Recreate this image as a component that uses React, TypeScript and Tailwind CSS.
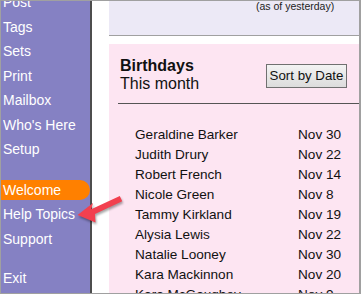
import React from "react";

const rows: [string, string][] = [
  ["Geraldine Barker", "Nov 30"],
  ["Judith Drury", "Nov 22"],
  ["Robert French", "Nov 14"],
  ["Nicole Green", "Nov 8"],
  ["Tammy Kirkland", "Nov 19"],
  ["Alysia Lewis", "Nov 22"],
  ["Natalie Looney", "Nov 30"],
  ["Kara Mackinnon", "Nov 20"],
  ["Kara McGaughey", "Nov 9"],
];

const topItems = ["Post", "Tags", "Sets", "Print", "Mailbox", "Who's Here", "Setup"];

function NavItem({ label }: { label: string }) {
  return <div className="h-[24.5px] leading-[24.5px] pl-[2px] whitespace-nowrap">{label}</div>;
}

export default function App() {
  return (
    <div
      className="relative w-[361px] h-[294px] border border-r-2 border-[#a0a0a0] bg-white overflow-hidden flex"
      style={{ fontFamily: '"Liberation Sans", Arial, sans-serif' }}
    >
      {/* Sidebar */}
      <div className="w-[91px] shrink-0 bg-[#8581c3] border-r-2 border-[#4d4d4d] text-white text-[14px]">
        <div className="-mt-[10.8px]">
          {topItems.map((t) => (
            <NavItem key={t} label={t} />
          ))}
          <div className="h-[15.5px]" />
          <div className="h-[25px] flex items-center">
            <div className="relative z-10 w-[98px] h-[20px] leading-[20px] bg-[#ff8000] rounded-r-[10px] pl-[2px]">
              Welcome
            </div>
          </div>
          <NavItem label="Help Topics" />
          <NavItem label="Support" />
          <div className="h-[15px]" />
          <NavItem label="Exit" />
        </div>
      </div>

      {/* Main */}
      <div className="flex-1 pl-[17px] flex flex-col min-w-0">
        <div className="h-[35px] shrink-0 bg-[#ece9f6] border-b border-[#a0a0a0]">
          <div className="-mt-px pl-[147px] text-[10.5px] leading-[12px] text-[#222] whitespace-nowrap">
            (as of yesterday)
          </div>
        </div>
        <div className="mt-[8px] flex-1 bg-[#fde5f2] pt-[12.5px] text-[#111]">
          <div className="flex justify-between pl-[11px] pr-[12px]">
            <div className="text-[16px] leading-[18px]">
              <div className="font-bold">Birthdays</div>
              <div>This month</div>
            </div>
            <button className="mt-[7.5px] h-[24px] w-[81px] border border-[#707070] bg-gradient-to-b from-[#f3f3f3] to-[#dcdcdc] text-[13.3px] leading-[20px] text-[#111] whitespace-nowrap">
              Sort by Date
            </button>
          </div>
          <div className="mt-[10.5px] ml-[9px] h-px bg-[#555]" />
          <div className="mt-[20.8px] pl-[26px] text-[13.6px] leading-[20px]">
            {rows.map(([n, d]) => (
              <div key={n} className="grid grid-cols-[163px_auto]">
                <div className="whitespace-nowrap">{n}</div>
                <div className="whitespace-nowrap">{d}</div>
              </div>
            ))}
          </div>
        </div>
      </div>

      {/* Annotation arrow */}
      <svg
        className="absolute -left-px -top-px pointer-events-none drop-shadow-[1px_2px_1px_rgba(0,0,0,0.35)]"
        width="361"
        height="294"
        viewBox="0 0 361 294"
      >
        <polygon
          points="77.5,215 93,203 91.2,209.2 119.8,196 122.2,201.2 95,214 95.5,222.5"
          fill="#f2404f"
        />
      </svg>
    </div>
  );
}
